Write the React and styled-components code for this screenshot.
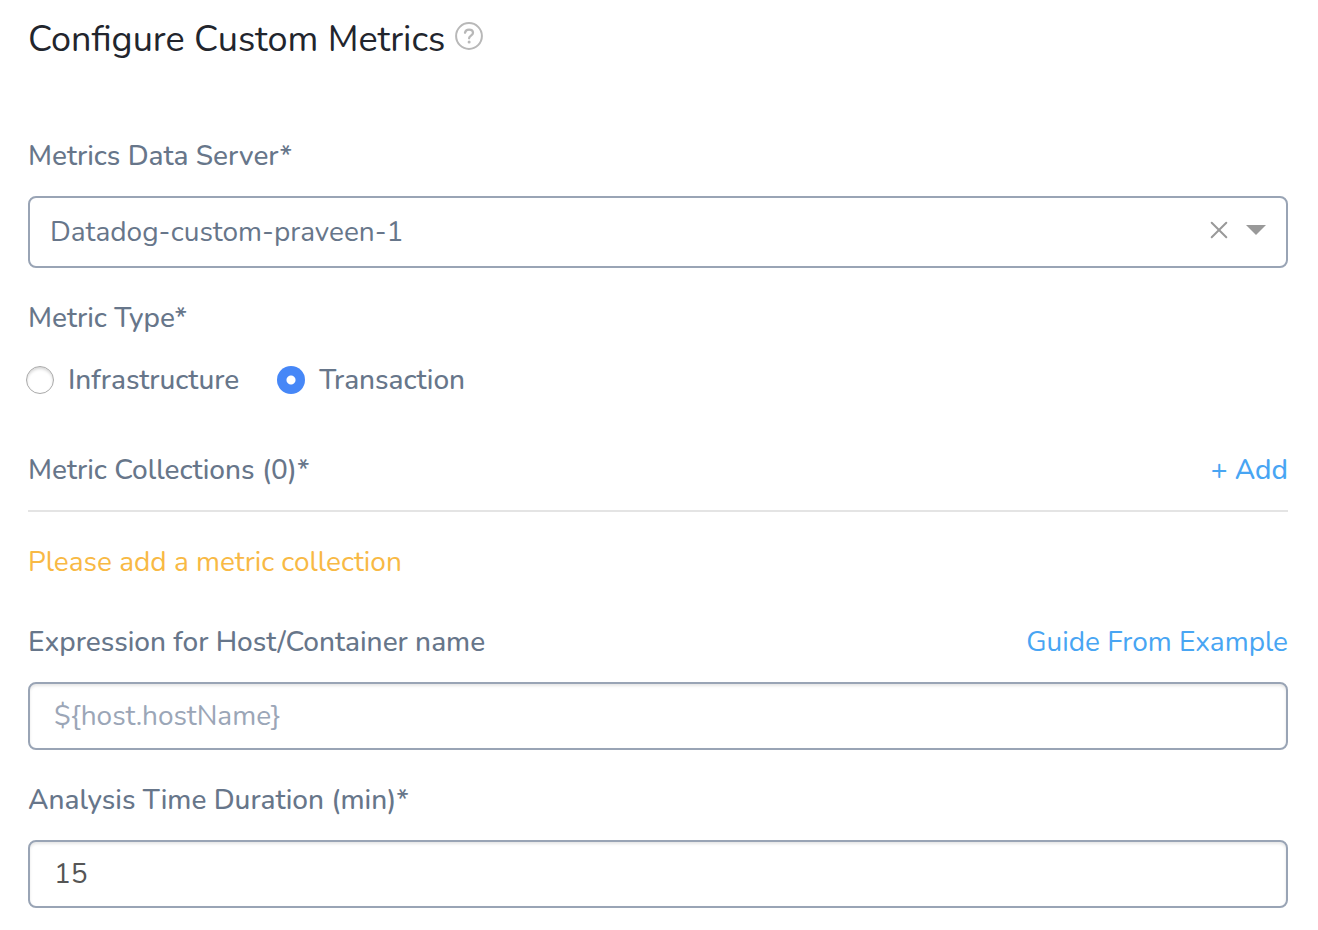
import React, { useState } from "react";
import styled, { createGlobalStyle } from "styled-components";

const GlobalStyle = createGlobalStyle`
  *, *::before, *::after { box-sizing: border-box; }
  body {
    margin: 0;
    background: #fff;
    color: #67768a;
    font-family: Nunito, "Open Sans", "Noto Sans", sans-serif;
    font-size: 28px;
    line-height: 40px;
  }
  button, input, select { font: inherit; }
`;

const Form = styled.form`
  padding: 16px 30px 22px 28px;
`;

const Header = styled.header`
  display: flex;
  align-items: flex-start;
  gap: 10px;
  margin-bottom: 72px;
`;

const Title = styled.h1`
  margin: 0;
  color: #22252d;
  font-size: 36px;
  font-weight: 400;
  line-height: 48px;
`;

const HelpButton = styled.button`
  display: flex;
  margin: 6px 0 0;
  padding: 0;
  border: 0;
  background: none;
  cursor: pointer;
`;

const Field = styled.div`
  display: flex;
  flex-direction: column;
  gap: 20px;
  margin-bottom: 30px;

  &:last-child { margin-bottom: 0; }
`;

const Label = styled.label`
  font-weight: 500;
`;

const LabelRow = styled.div`
  display: flex;
  justify-content: space-between;
  gap: 20px;
`;

const SelectBox = styled.div`
  position: relative;
`;

const Select = styled.select`
  display: block;
  width: 100%;
  height: 72px;
  padding: 0 92px 0 20px;
  border: 2px solid #99a4b5;
  border-radius: 8px;
  background: #fff;
  color: #67768a;
  appearance: none;
`;

const SelectActions = styled.div`
  position: absolute;
  top: 0;
  right: 22px;
  bottom: 4px;
  display: flex;
  align-items: center;
  gap: 18px;
  pointer-events: none;
`;

const ClearButton = styled.button`
  display: flex;
  padding: 0;
  border: 0;
  background: none;
  cursor: pointer;
  pointer-events: auto;
`;

const Input = styled.input`
  display: block;
  width: 100%;
  height: 68px;
  padding: 0 24px;
  border: 2px solid #99a4b5;
  border-radius: 8px;
  background: #fff;
  box-shadow: inset 0 2px 3px rgba(0, 0, 0, 0.1);
  color: #555;

  &::placeholder { color: #9ba6b7; opacity: 1; }
`;

const RadioGroup = styled.fieldset`
  min-width: 0;
  margin: 0 0 50px;
  padding: 0;
  border: 0;
`;

const Legend = styled.legend`
  margin-bottom: 22px;
  padding: 0;
  font-weight: 500;
`;

const RadioRow = styled.div`
  display: flex;
  gap: 38px;
  margin-left: -2px;
`;

const RadioLabel = styled.label`
  display: flex;
  align-items: center;
  gap: 14px;
  font-weight: 500;
  cursor: pointer;
`;

const Radio = styled.input`
  width: 28px;
  height: 28px;
  margin: 0;
  border: 1px solid #aaa;
  border-radius: 50%;
  background: #fff;
  box-shadow: inset 0 2px 3px rgba(0, 0, 0, 0.16);
  appearance: none;

  &:checked {
    border: 0;
    background: radial-gradient(circle, #fff 4px, #4687f7 5px);
    box-shadow: none;
  }
`;

const Collections = styled.section`
  margin-bottom: 40px;
`;

const CollectionsHeader = styled.div`
  display: flex;
  justify-content: space-between;
  padding-bottom: 20px;
  border-bottom: 2px solid #e4e4e4;
`;

const CollectionsTitle = styled.h2`
  margin: 0;
  font-size: inherit;
  font-weight: 500;
`;

const AddButton = styled.button`
  padding: 0;
  border: 0;
  background: none;
  color: #48a5f3;
  font-weight: 500;
  cursor: pointer;
`;

const Warning = styled.p`
  margin: 30px 0 0;
  color: #f8b944;
`;

const GuideLink = styled.a`
  color: #48a5f3;
  text-decoration: none;
`;

export default function App() {
  const [server, setServer] = useState("datadog");
  const [type, setType] = useState("transaction");

  return (
    <>
      <GlobalStyle />
      <Form onSubmit={(e) => e.preventDefault()}>
        <Header>
          <Title>Configure Custom Metrics</Title>
          <HelpButton type="button" aria-label="Help">
            <svg width="28" height="28" viewBox="0 0 28 28" fill="none" stroke="#b8b8b8" strokeLinecap="round">
              <circle cx="14" cy="14" r="12.9" strokeWidth="2" />
              <path d="M10 10.7c.4-2 1.9-3.1 4-3.1 2.4 0 4 1.3 4 3.2 0 2.8-3.9 2.9-3.9 5.5" strokeWidth="2.3" />
              <circle cx="14.1" cy="20.1" r="1.5" fill="#b8b8b8" stroke="none" />
            </svg>
          </HelpButton>
        </Header>

        <Field>
          <Label htmlFor="server">Metrics Data Server*</Label>
          <SelectBox>
            <Select id="server" value={server} onChange={(e) => setServer(e.target.value)}>
              <option value="" />
              <option value="datadog">Datadog-custom-praveen-1</option>
            </Select>
            <SelectActions>
              <ClearButton type="button" aria-label="Clear server" onClick={() => setServer("")}>
                <svg width="18" height="18" viewBox="0 0 18 18" stroke="#999" strokeWidth="2" strokeLinecap="round">
                  <path d="M1.7 1.7 16.3 16.3M16.3 1.7 1.7 16.3" />
                </svg>
              </ClearButton>
              <svg width="20" height="10" viewBox="0 0 20 10" fill="#999" aria-hidden="true">
                <path d="M0 0h20L10 10z" />
              </svg>
            </SelectActions>
          </SelectBox>
        </Field>

        <RadioGroup>
          <Legend>Metric Type*</Legend>
          <RadioRow>
            <RadioLabel>
              <Radio
                type="radio"
                name="type"
                checked={type === "infrastructure"}
                onChange={() => setType("infrastructure")}
              />
              Infrastructure
            </RadioLabel>
            <RadioLabel>
              <Radio
                type="radio"
                name="type"
                checked={type === "transaction"}
                onChange={() => setType("transaction")}
              />
              Transaction
            </RadioLabel>
          </RadioRow>
        </RadioGroup>

        <Collections>
          <CollectionsHeader>
            <CollectionsTitle>Metric Collections (0)*</CollectionsTitle>
            <AddButton type="button">+ Add</AddButton>
          </CollectionsHeader>
          <Warning>Please add a metric collection</Warning>
        </Collections>

        <Field>
          <LabelRow>
            <Label htmlFor="host">Expression for Host/Container name</Label>
            <GuideLink href="#example">Guide From Example</GuideLink>
          </LabelRow>
          <Input id="host" type="text" placeholder="${host.hostName}" />
        </Field>

        <Field>
          <Label htmlFor="duration">Analysis Time Duration (min)*</Label>
          <Input id="duration" type="text" inputMode="numeric" defaultValue="15" />
        </Field>
      </Form>
    </>
  );
}
